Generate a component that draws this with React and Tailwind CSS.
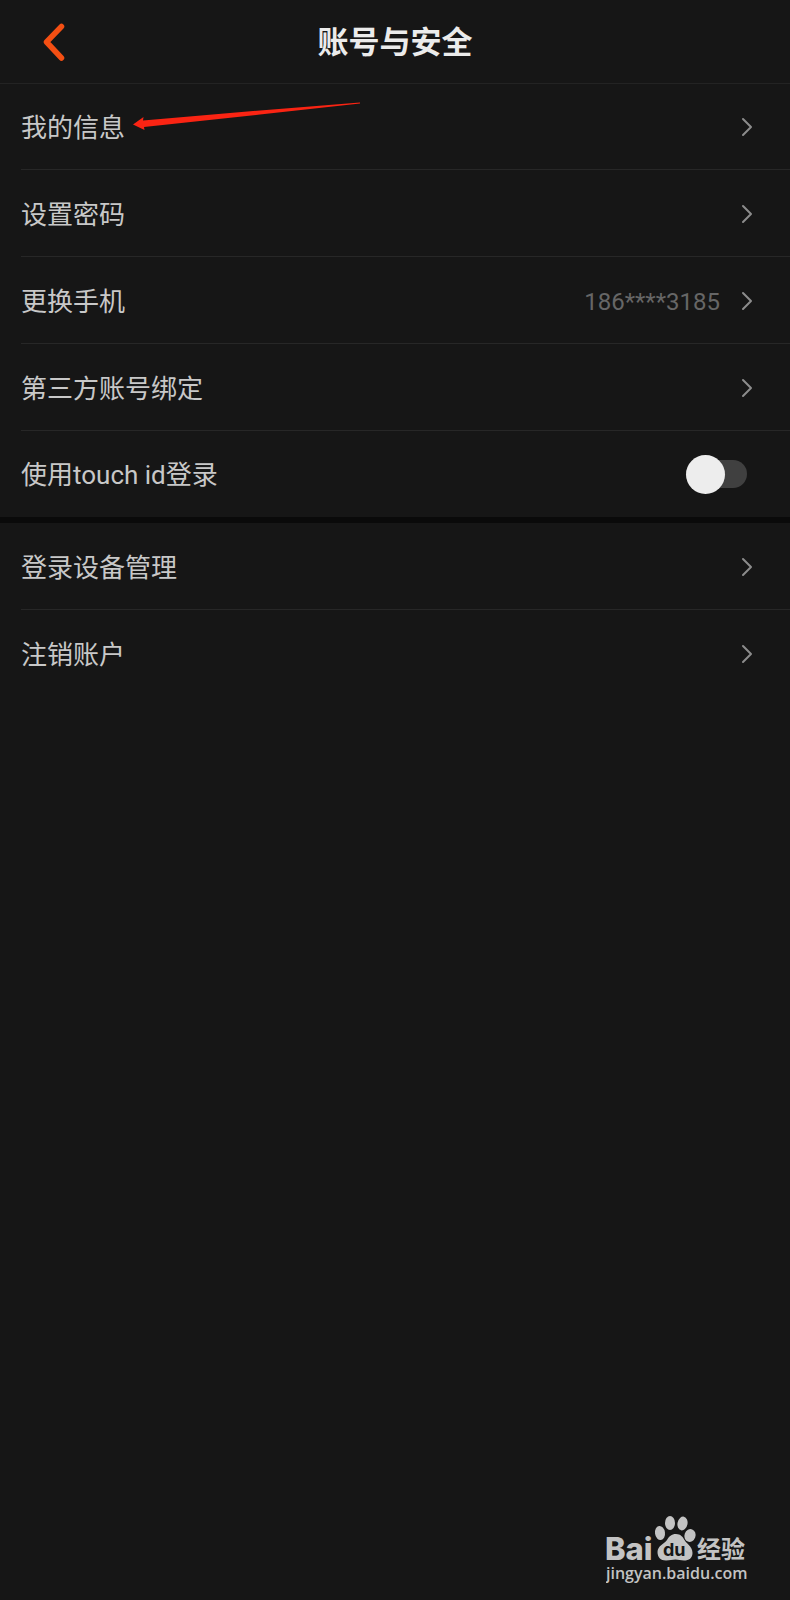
import React, { useState } from "react";

const accountItems = [
  { label: "我的信息" },
  { label: "设置密码" },
  { label: "更换手机", value: "186****3185" },
  { label: "第三方账号绑定" },
];

const deviceItems = [{ label: "登录设备管理" }, { label: "注销账户" }];

function Chevron() {
  return (
    <svg
      width="12"
      height="20"
      viewBox="0 0 12 20"
      fill="none"
      stroke="#8c8c8c"
      strokeWidth="2"
      strokeLinecap="round"
      strokeLinejoin="round"
      aria-hidden="true"
    >
      <path d="M2 2l8 8-8 8" />
    </svg>
  );
}

function Row({ label, value, last }) {
  return (
    <li className="pl-[21px]">
      <button
        type="button"
        className={`flex h-[87px] w-full items-center justify-between border-b pr-[37px] pt-0.5 text-left ${
          last ? "border-transparent" : "border-[#272727]"
        }`}
      >
        <span className="pt-0.5">{label}</span>
        <span className="flex items-center gap-[21px]">
          {value && <span className="pt-0.5 text-2xl text-[#666666]">{value}</span>}
          <Chevron />
        </span>
      </button>
    </li>
  );
}

function Arrow() {
  return (
    <svg
      className="pointer-events-none absolute left-[132px] top-[101px]"
      width="230"
      height="32"
      viewBox="0 0 230 32"
      fill="#fa2413"
      aria-hidden="true"
    >
      <path d="M1 23.5L11.5 16L11 19.5L128 9.5L228 1.5V2.5L128 13.5L12 26L12.500 29Z" />
    </svg>
  );
}

function Watermark() {
  return (
    <svg
      width="146"
      height="70"
      viewBox="0 0 146 70"
      fill="#c3c3c3"
      role="img"
      aria-label="Baidu 经验"
    >
      <text x="-1" y="46" fontSize="31" fontWeight="800" fontFamily="Inter, sans-serif">
        Bai
      </text>
      <ellipse cx="54" cy="19" rx="5" ry="7" transform="rotate(-8 54 19)" />
      <ellipse cx="64" cy="9" rx="5" ry="7" />
      <ellipse cx="76.500" cy="9.500" rx="5" ry="7" transform="rotate(12 76.500 9.500)" />
      <ellipse cx="84" cy="21.500" rx="5.500" ry="6.500" transform="rotate(20 84 21.500)" />
      <path d="M70 20C74.500 20 77 23 78.500 26C80 29.500 86.500 32 86.500 39C86.500 44 83 46.500 78 46.500C74.500 46.500 72.500 45.500 69.500 45.500C66 45.500 64 46.500 60 46.500C54.500 46.500 51.500 43 51.500 38C51.500 32 58 30 61 26C63 22.500 65.500 20 70 20Z" />
      <text x="57" y="42" fontSize="18" fontWeight="700" fontFamily="Inter, sans-serif" fill="#161616">
        du
      </text>
      <text x="91" y="44" fontSize="24" fontWeight="700" fontFamily="'Noto Sans CJK SC', sans-serif">
        经验
      </text>
      <text x="0" y="65" fontSize="16" fontWeight="600" fontFamily="'Open Sans', sans-serif">
        jingyan.baidu.com
      </text>
    </svg>
  );
}

export default function App() {
  const [touchId, setTouchId] = useState(false);

  return (
    <div className="relative flex min-h-screen flex-col bg-[#161616] font-['Roboto','Noto_Sans_CJK_SC',sans-serif] text-[26px] leading-8 text-[#c8c8c8]">
      <header className="grid h-[83px] grid-cols-[1fr_auto_1fr] items-center shadow-[0_1px_0_#232323]">
        <button type="button" aria-label="返回" className="justify-self-start pl-[42px]">
          <svg
            width="24"
            height="38"
            viewBox="0 0 24 38"
            fill="none"
            stroke="#f44f13"
            strokeWidth="5.5"
            strokeLinecap="round"
            strokeLinejoin="round"
          >
            <path d="M19.500 3.500L4.500 19l15 16" />
          </svg>
        </button>
        <h1 className="pt-0.5 text-[31px] font-bold text-[#ebebeb]">账号与安全</h1>
      </header>

      <main className="flex-1">
        <ul>
          {accountItems.map((item) => (
            <Row key={item.label} {...item} />
          ))}
          <li>
            <label className="flex h-[86px] cursor-pointer items-center justify-between pl-[21px] pr-[43px]">
              <span className="pt-0.5">使用touch id登录</span>
              <span className="relative flex items-center">
                <input
                  type="checkbox"
                  role="switch"
                  checked={touchId}
                  onChange={(e) => setTouchId(e.target.checked)}
                  className="peer h-7 w-[61px] appearance-none rounded-full bg-[#404040] checked:bg-[#f44f13]"
                />
                <span className="pointer-events-none absolute left-0 size-[39px] rounded-full bg-[#ededed] peer-checked:left-[22px]" />
              </span>
            </label>
          </li>
        </ul>

        <ul className="border-t-[6px] border-[#0a0a0a]">
          {deviceItems.map((item, i) => (
            <Row key={item.label} {...item} last={i === deviceItems.length - 1} />
          ))}
        </ul>
      </main>

      <footer className="flex justify-end pb-4 pr-[38px]">
        <Watermark />
      </footer>

      <Arrow />
    </div>
  );
}
